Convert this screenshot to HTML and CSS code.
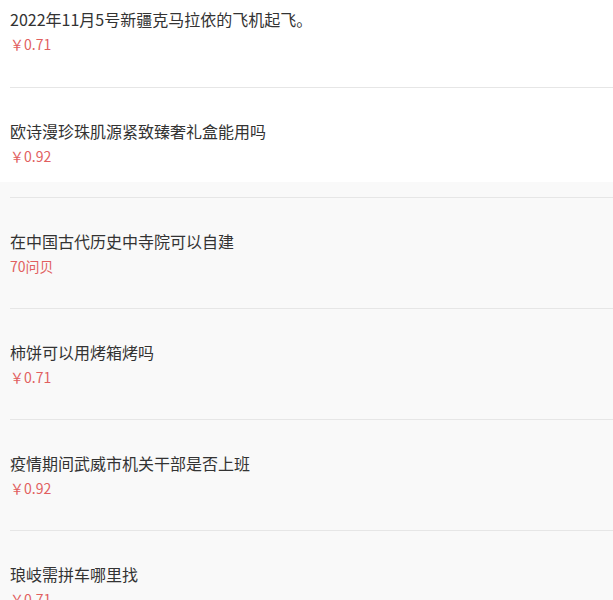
FILE: index.html
```html
<!DOCTYPE html>
<html lang="zh-CN">
<head>
  <meta charset="UTF-8" />
  <title>问答列表</title>
  <meta name="viewport" content="width=device-width, initial-scale=1.0" />
  <link rel="stylesheet" href="styles.css">
</head>
<body>
  <!-- 顶部列表 -->
  <div class="list list-top">
    <div class="item">
      <div class="title">2022年11月5号新疆克马拉依的飞机起飞。</div>
      <div class="price">￥0.71</div>
    </div>
    <div class="item">
      <div class="title">欧诗漫珍珠肌源紧致臻奢礼盒能用吗</div>
      <div class="price">￥0.92</div>
    </div>
  </div>

  <!-- 更多问题 -->
  <div class="list list-more">
    <div class="item">
      <div class="title">在中国古代历史中寺院可以自建</div>
      <div class="price">70问贝</div>
    </div>
    <div class="item">
      <div class="title">柿饼可以用烤箱烤吗</div>
      <div class="price">￥0.71</div>
    </div>
    <div class="item">
      <div class="title">疫情期间武威市机关干部是否上班</div>
      <div class="price">￥0.92</div>
    </div>
    <div class="item">
      <div class="title">琅岐需拼车哪里找</div>
      <div class="price">￥0.71</div>
    </div>
  </div>
</body>
</html>
```

FILE: styles.css
```css
* {
  box-sizing: border-box;
}

body {
  margin: 0;
  background: #f9f9f9;
  font-family: "Noto Sans CJK SC", "Noto Sans", sans-serif;
  color: #333;
}

.list {
  padding-left: 10px;
}

.list-top {
  background: #fff;
}

.list-more {
  padding-top: 15px;
}

.item {
  border-top: 1px solid #e6e6e6;
  padding: 32px 0 32px;
}

.list-top .item:first-child {
  border-top: none;
  padding-top: 8px;
  padding-bottom: 33px;
}

.list-top .item:last-child {
  padding-bottom: 16px;
}

.title {
  font-size: 16px;
  line-height: 22px;
  white-space: nowrap;
}

.price {
  margin-top: 4px;
  font-size: 14px;
  line-height: 20px;
  color: #e15f5f;
}
```
